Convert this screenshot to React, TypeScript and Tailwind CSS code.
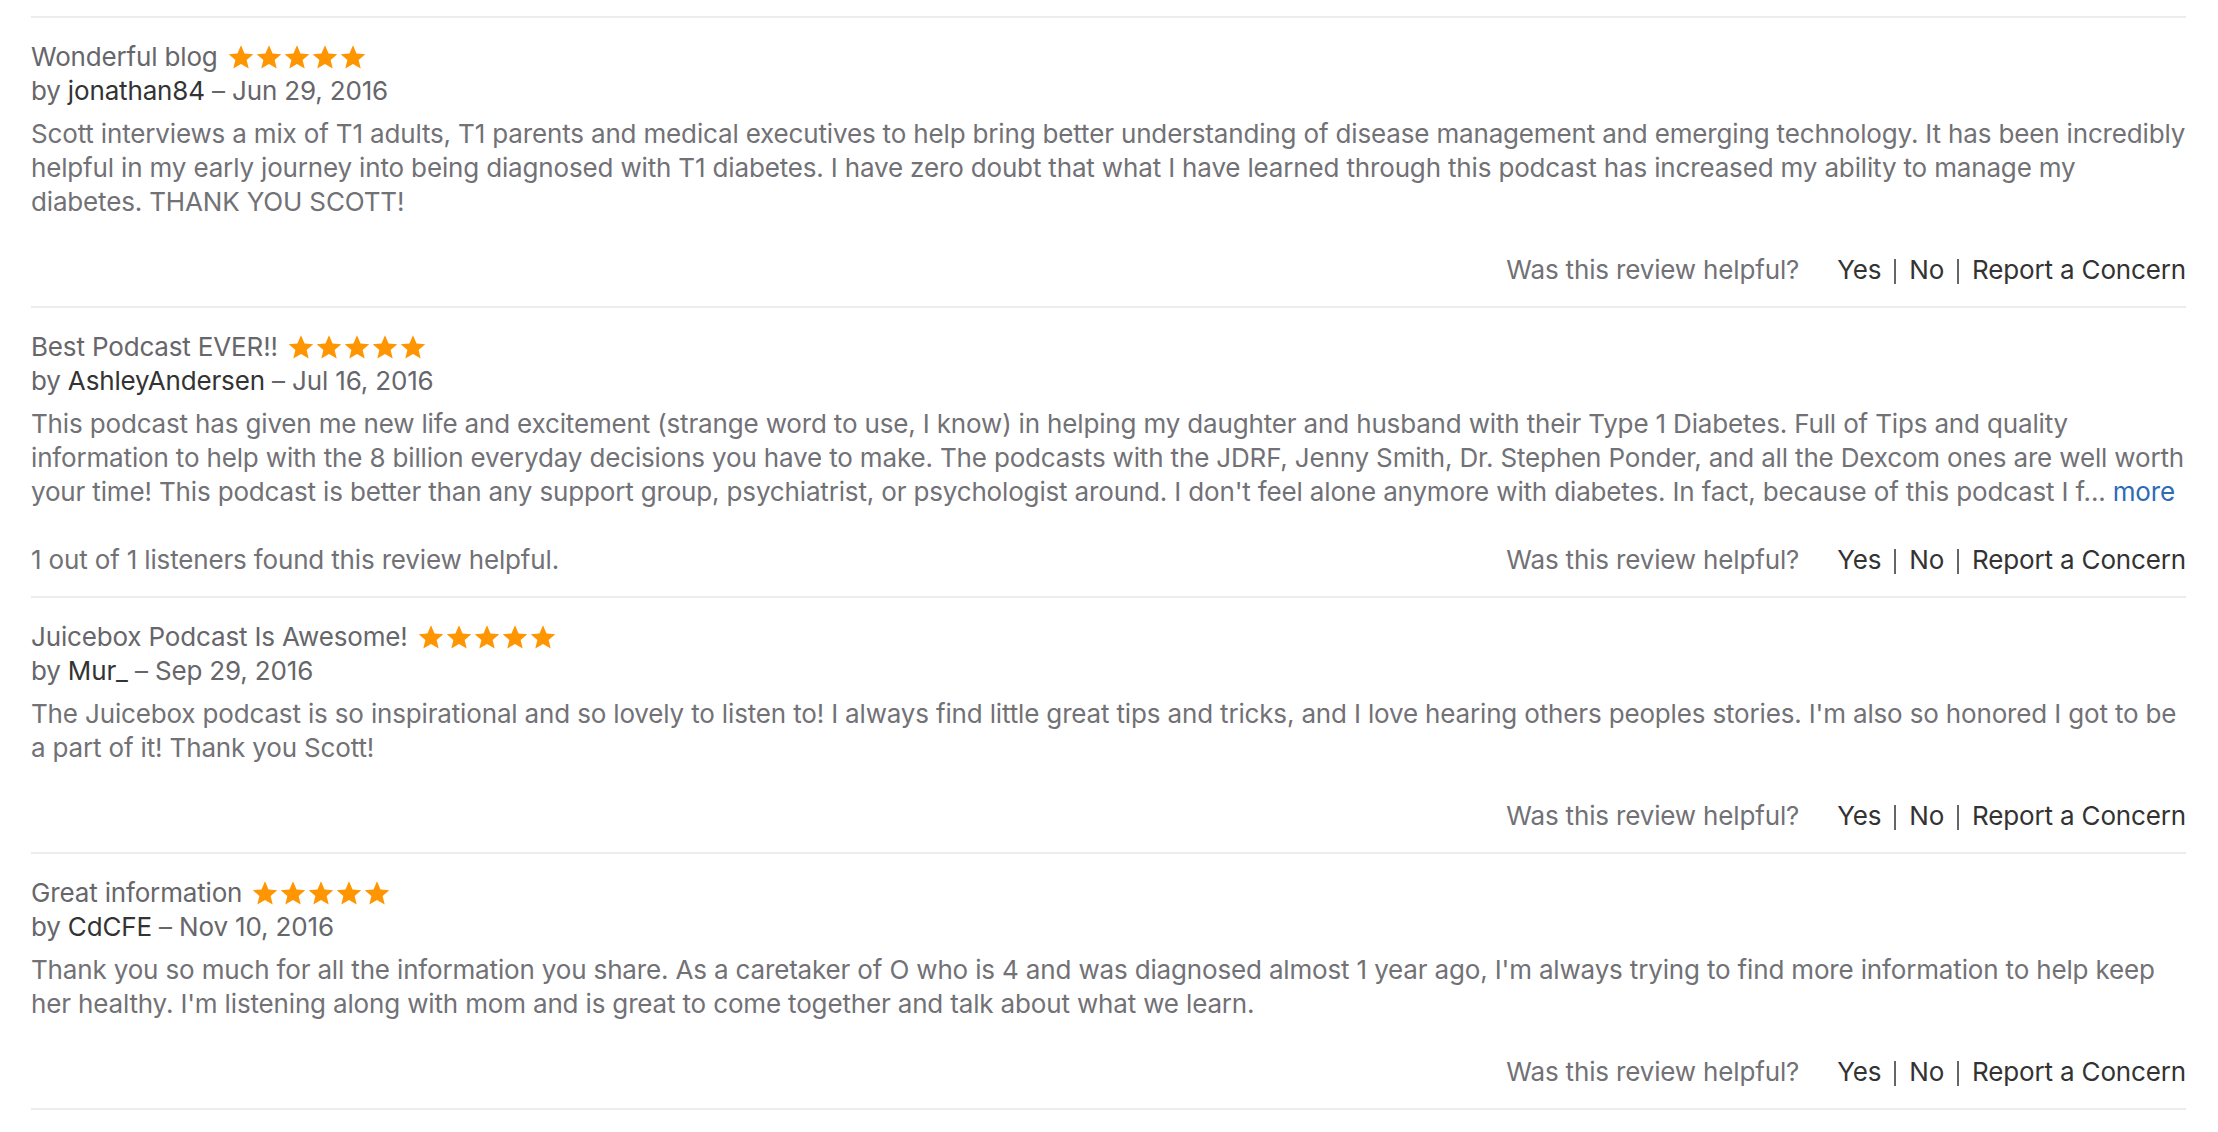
import React from "react";

type Review = {
  title: string;
  author: string;
  date: string;
  lines: string[];
  more?: boolean;
  found?: string;
};

const reviews: Review[] = [
  {
    title: "Wonderful blog",
    author: "jonathan84",
    date: "Jun 29, 2016",
    lines: [
      "Scott interviews a mix of T1 adults, T1 parents and medical executives to help bring better understanding of disease management and emerging technology. It has been incredibly",
      "helpful in my early journey into being diagnosed with T1 diabetes. I have zero doubt that what I have learned through this podcast has increased my ability to manage my",
      "diabetes. THANK YOU SCOTT!",
    ],
  },
  {
    title: "Best Podcast EVER!!",
    author: "AshleyAndersen",
    date: "Jul 16, 2016",
    lines: [
      "This podcast has given me new life and excitement (strange word to use, I know) in helping my daughter and husband with their Type 1 Diabetes. Full of Tips and quality",
      "information to help with the 8 billion everyday decisions you have to make. The podcasts with the JDRF, Jenny Smith, Dr. Stephen Ponder, and all the Dexcom ones are well worth",
      "your time! This podcast is better than any support group, psychiatrist, or psychologist around. I don't feel alone anymore with diabetes. In fact, because of this podcast I f...",
    ],
    more: true,
    found: "1 out of 1 listeners found this review helpful.",
  },
  {
    title: "Juicebox Podcast Is Awesome!",
    author: "Mur_",
    date: "Sep 29, 2016",
    lines: [
      "The Juicebox podcast is so inspirational and so lovely to listen to! I always find little great tips and tricks, and I love hearing others peoples stories. I'm also so honored I got to be",
      "a part of it! Thank you Scott!",
    ],
  },
  {
    title: "Great information",
    author: "CdCFE",
    date: "Nov 10, 2016",
    lines: [
      "Thank you so much for all the information you share. As a caretaker of O who is 4 and was diagnosed almost 1 year ago, I'm always trying to find more information to help keep",
      "her healthy. I'm listening along with mom and is great to come together and talk about what we learn.",
    ],
  },
];

function Star() {
  return (
    <svg width="28" height="27" viewBox="0 0 24 24" className="block">
      <path
        d="M12 1.2l3.15 7.2 7.75.65-5.9 5.1 1.85 7.65L12 17.75 5.15 21.8 7 14.15l-5.9-5.1 7.75-.65z"
        fill="#ff9500"
      />
    </svg>
  );
}

function Stars() {
  return (
    <span className="ml-[9px] inline-flex items-center">
      <Star />
      <Star />
      <Star />
      <Star />
      <Star />
    </span>
  );
}

function Bar() {
  return <span className="mx-[13px] mt-[3px] block h-[25px] w-[2px] shrink-0 bg-[#666666]" />;
}

function ReviewItem({ r }: { r: Review }) {
  return (
    <div className="border-b-2 border-[#ececec] pt-[22px] pb-[19px]">
      <div className="flex h-[34px] items-center text-[26px] leading-[34px] text-[#66666b]">
        <span>{r.title}</span>
        <Stars />
      </div>
      <div className="h-[33px] text-[26px] leading-[33px] text-[#66666b]">
        by <span className="text-[#333333]">{r.author}</span> – {r.date}
      </div>
      <div className="mt-[10px] text-[26px] leading-[34px] text-[#717176]">
        {r.lines.map((l, i) => (
          <div key={i} className="whitespace-nowrap">
            {l}
            {r.more && i === r.lines.length - 1 ? (
              <span className="text-[#2d6cb5]"> more</span>
            ) : null}
          </div>
        ))}
      </div>
      <div className="mt-[34px] flex h-[34px] items-center justify-between text-[26px] leading-[34px]">
        <span className="text-[#717176]">{r.found ?? ""}</span>
        <div className="flex items-center">
          <span className="text-[#717176]">Was this review helpful?</span>
          <span className="ml-[38px] text-[#333333]">Yes</span>
          <Bar />
          <span className="text-[#333333]">No</span>
          <Bar />
          <span className="text-[#333333]">Report a Concern</span>
        </div>
      </div>
    </div>
  );
}

export default function App() {
  return (
    <div
      className="min-h-[1132px] w-full bg-white pl-[31px] pr-[32px] pt-[16px]"
      style={{ fontFamily: "Inter, 'Noto Sans', sans-serif", letterSpacing: "-0.01em" }}
    >
      <div className="border-t-2 border-[#ececec]">
        {reviews.map((r, i) => (
          <ReviewItem key={i} r={r} />
        ))}
      </div>
    </div>
  );
}
